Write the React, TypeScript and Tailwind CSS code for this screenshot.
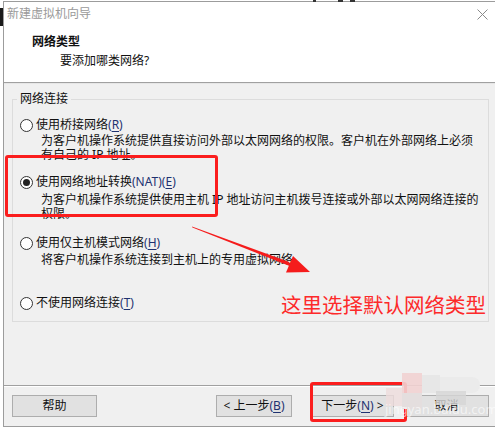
import React from 'react';

const FONT = "font-['Noto_Sans','Noto_Sans_CJK_SC',sans-serif]";

const Radio = ({ checked }: { checked?: boolean }) => (
  <span className="w-[13px] h-[13px] rounded-full border border-[#333333] bg-white flex items-center justify-center shrink-0">
    {checked && <span className="w-[7px] h-[7px] rounded-full bg-[#222222]" />}
  </span>
);

// mnemonic key, underlined like the Win32 wizard
const Key = ({ k }: { k: string }) => (
  <span className="text-[#1e3270]">
    (<span className="underline underline-offset-2">{k}</span>)
  </span>
);

const Option = ({
  label,
  extra,
  k,
  checked,
  className = '',
}: {
  label: string;
  extra?: string;
  k: string;
  checked?: boolean;
  className?: string;
}) => (
  <div className={`flex items-center h-[16px] ${className}`}>
    <span className="ml-[7px]">
      <Radio checked={checked} />
    </span>
    <span className="ml-[3px] text-[12px] leading-[16px] text-[#111111] whitespace-nowrap">
      {label}
      {extra && <span className="text-[#1e3270]">{extra}</span>}
      <Key k={k} />
    </span>
  </div>
);

const Desc = ({ children, className = '' }: { children: React.ReactNode; className?: string }) => (
  <div className={`pl-[28px] text-[12px] leading-[14px] text-[#111111] whitespace-nowrap ${className}`}>
    {children}
  </div>
);

const WinButton = ({ children, className = '' }: { children: React.ReactNode; className?: string }) => (
  <div
    className={`h-[22px] border border-[#adadad] bg-[#e1e1e1] flex items-center justify-center text-[12px] text-[#111111] whitespace-nowrap ${className}`}
  >
    {children}
  </div>
);

export default function App() {
  return (
    <div className={`relative w-[495px] h-[428px] bg-white overflow-hidden ${FONT}`}>
      {/* bits of the desktop behind the window */}
      <div className="absolute left-0 top-[8px] w-[3px] h-[18px] bg-[#1a1a1a]" />
      <div className="absolute left-[313px] top-0 w-[3px] h-[2px] bg-[#333333]" />
      <div className="absolute left-[338px] top-0 w-[5px] h-[2px] bg-[#333333]" />
      <div className="absolute left-[350px] top-0 w-[5px] h-[2px] bg-[#333333]" />

      <div className="ml-[3px] mt-[1px] border-t border-l border-b border-[#9c9c9c] flex flex-col">
        {/* title + header */}
        <div className="h-[80px] bg-white flex flex-col">
          <div className="h-[24px] flex items-center justify-between pl-[3px] pr-[7px]">
            <span className="text-[12px] text-[#9a9a9a]">新建虚拟机向导</span>
            <svg width="11" height="11" viewBox="0 0 11 11">
              <path d="M0.5 0.5 L10.5 10.5 M10.5 0.5 L0.5 10.5" stroke="#8a8a8a" strokeWidth="1" fill="none" />
            </svg>
          </div>
          <div className="pl-[28px] pt-[8px] text-[12px] leading-[16px] font-bold text-[#111111]">网络类型</div>
          <div className="pl-[56px] mt-[3px] text-[12px] leading-[16px] text-[#111111]">要添加哪类网络?</div>
        </div>
        <div className="h-[2px] border-t border-[#a0a0a0] bg-[#e6e6e6]" />

        {/* body */}
        <div className="h-[301px] bg-[#f0f0f0] pt-[7px]">
          <fieldset className="ml-[8px] mr-[6px] border border-[#dcdcdc] pb-[10px]">
            <legend className="ml-[4px] px-[3px] text-[12px] leading-[16px] text-[#111111]">网络连接</legend>

            <Option label="使用桥接网络" k="R" className="mt-[10px]" />
            <Desc className="mt-[1px]">
              为客户机操作系统提供直接访问外部以太网网络的权限。客户机在外部网络上必须
              <br />
              有自己的 IP 地址。
            </Desc>

            <Option label="使用网络地址转换" extra="(NAT)" k="E" checked className="mt-[12px]" />
            <Desc className="mt-[3px]">
              为客户机操作系统提供使用主机 IP 地址访问主机拨号连接或外部以太网网络连接的
              <br />
              权限。
            </Desc>

            <Option label="使用仅主机模式网络" k="H" className="mt-[14px]" />
            <Desc className="mt-[2px]">将客户机操作系统连接到主机上的专用虚拟网络。</Desc>

            <Option label="不使用网络连接" k="T" className="mt-[28px]" />
          </fieldset>
        </div>

        <div className="h-[2px] border-t border-[#a0a0a0] bg-white" />

        {/* footer buttons */}
        <div className="h-[39px] bg-[#f0f0f0] pt-[8px] flex items-start">
          <WinButton className="ml-[8px] w-[85px]">帮助</WinButton>
          <WinButton className="ml-[119px] w-[76px]">
            &lt; 上一步<Key k="B" />
          </WinButton>
          <WinButton className="ml-[19px] w-[83px]">
            下一步<Key k="N" />&nbsp;&gt;
          </WinButton>
          <WinButton className="ml-[10px] w-[85px]">取消</WinButton>
        </div>
      </div>

      {/* annotations drawn over the screenshot */}
      <div className="absolute left-[5px] top-[155px] w-[213px] h-[62px] border-[3px] border-[#fb1e1e] rounded-[3px]" />
      <div className="absolute left-[310px] top-[382px] w-[97px] h-[40px] border-[3px] border-[#fb1e1e] rounded-[3px]" />

      <svg className="absolute left-0 top-0" width="495" height="428" viewBox="0 0 495 428">
        <polygon points="192,226.5 192.4,227.6 290.8,266.5 289.2,262" fill="#f51c1c" />
        <polygon points="310,272 286,272.5 293,256" fill="#f51c1c" />
      </svg>

      <div className="absolute left-[281px] top-[291px] text-[20.5px] leading-[28px] text-[#fd2a2a] whitespace-nowrap">
        这里选择默认网络类型
      </div>

      {/* pixelated watermark over the cancel button */}
      <div className="absolute left-[402px] top-[373px] w-[20px] h-[20px] bg-[#f1d2d2] opacity-90" />
      <div className="absolute left-[386px] top-[388px] w-[16px] h-[18px] bg-[#eedcdc] opacity-80" />
      <div className="absolute left-[422px] top-[375px] w-[18px] h-[18px] bg-[#e7e7e7]" />
      <div className="absolute left-[440px] top-[377px] w-[40px] h-[16px] bg-[#ebebeb] rounded-r-[10px]" />
      <div className="absolute left-[402px] top-[393px] w-[20px] h-[16px] bg-[#e4dede]" />
      <div className="absolute left-[436px] top-[391px] w-[30px] h-[14px] bg-[#d6d6d6] opacity-80" />
      <div className="absolute left-[385px] top-[402px] text-[13px] leading-[14px] text-white/60 whitespace-nowrap">
        jingyan.baidu.com
      </div>
    </div>
  );
}
